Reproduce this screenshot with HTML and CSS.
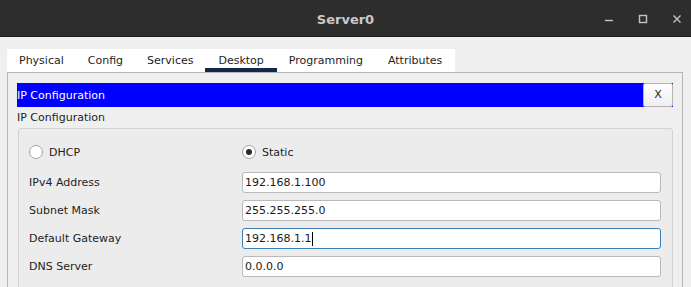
FILE: index.html
```html
<!DOCTYPE html>
<html lang="en">
<head>
  <meta charset="UTF-8" />
  <title>Server0</title>
  <link rel="stylesheet" href="styles.css">
</head>
<body>

  <!-- Window title bar -->
  <div class="titlebar">
    <div></div>
    <div class="title">Server0</div>
    <div class="win-buttons">
      <svg class="win-btn" width="10" height="10" viewBox="0 0 10 10"><line x1="1" y1="6.5" x2="9" y2="6.5" /></svg>
      <svg class="win-btn" width="10" height="10" viewBox="0 0 10 10"><rect x="1.5" y="1.5" width="7" height="7" /></svg>
      <svg class="win-btn" width="10" height="10" viewBox="0 0 10 10"><path d="M1.5 1.5 L8.5 8.5 M8.5 1.5 L1.5 8.5" /></svg>
    </div>
  </div>

  <div class="window-body">
    <!-- Tabs -->
    <div class="tabs">
      <div class="tab">Physical</div>
      <div class="tab">Config</div>
      <div class="tab">Services</div>
      <div class="tab active">Desktop</div>
      <div class="tab">Programming</div>
      <div class="tab last">Attributes</div>
    </div>

    <div class="panel">
      <div class="app-bar">
        <span class="app-title">IP Configuration</span>
        <div class="close-btn">X</div>
      </div>

      <div class="section-label">IP Configuration</div>

      <div class="group">
        <div class="form-grid">
          <div class="radio-row">
            <span class="radio"></span>
            <span>DHCP</span>
          </div>
          <div class="radio-row">
            <span class="radio checked"></span>
            <span>Static</span>
          </div>

          <div class="label">IPv4 Address</div>
          <div class="field">192.168.1.100</div>

          <div class="label">Subnet Mask</div>
          <div class="field">255.255.255.0</div>

          <div class="label">Default Gateway</div>
          <div class="field focused">192.168.1.1<span class="caret"></span></div>

          <div class="label">DNS Server</div>
          <div class="field">0.0.0.0</div>
        </div>
      </div>
    </div>
  </div>

</body>
</html>
```

FILE: styles.css
```css
html, body {
  margin: 0;
  padding: 0;
  width: 100%;
  height: 100%;
  overflow: hidden;
  font-family: 'DejaVu Sans', sans-serif;
  font-size: 11px;
  background-color: #efefef;
  color: #1e1e1e;
}

.titlebar {
  display: grid;
  grid-template-columns: 1fr auto 1fr;
  align-items: center;
  height: 36px;
  background-color: #2d2d2d;
  border-bottom: 1px solid #1b1b1b;
}

.title {
  font-size: 13px;
  font-weight: bold;
  color: #c9c9c9;
  padding-top: 2px;
}

.win-buttons {
  display: flex;
  justify-content: flex-end;
  gap: 24px;
  padding-right: 9px;
  padding-top: 2px;
}

.win-btn {
  fill: none;
  stroke: #c4c4c4;
  stroke-width: 1.4;
}

.window-body {
  padding: 12px 8px 0 7px;
}

.tabs {
  display: inline-flex;
  background-color: #ffffff;
  height: 23px;
  vertical-align: top;
}

.tab {
  padding: 0 12px;
  line-height: 24px;
  color: #1e1e1e;
}

.tab.active {
  box-shadow: inset 0 -4px 0 #0f2a4b;
  padding: 0 13px;
}

.tab.last {
  padding: 0 13px;
}

.panel {
  border: 1px solid #b6b6b6;
  padding: 10px 9px 40px 9px;
}

.app-bar {
  display: flex;
  align-items: center;
  height: 24px;
  background-color: #0000ff;
}

.app-title {
  flex: 1;
  color: #ffffff;
}

.close-btn {
  width: 28px;
  height: 22px;
  line-height: 22px;
  text-align: center;
  background: linear-gradient(#ffffff, #eeeeee);
  border: 1px solid #b3b3b3;
  border-radius: 2px;
  color: #222;
}

.section-label {
  line-height: 20px;
  padding-top: 1px;
}

.group {
  margin-left: 1px;
  border: 1px solid #d3d3d3;
  border-radius: 3px;
  background-color: #ececec;
  padding: 12px 11px 20px 10px;
}

.form-grid {
  display: grid;
  grid-template-columns: 213px 1fr;
  grid-template-rows: 24px;
  grid-auto-rows: 21px;
  row-gap: 7px;
  align-items: center;
}

.radio-row {
  display: flex;
  align-items: center;
  align-self: start;
  gap: 6px;
  height: 22px;
}

.radio {
  box-sizing: border-box;
  width: 14px;
  height: 14px;
  border: 1px solid #a3a3a3;
  border-radius: 50%;
  background-color: #ffffff;
  display: flex;
  align-items: center;
  justify-content: center;
}

.radio.checked::after {
  content: "";
  width: 6px;
  height: 6px;
  border-radius: 50%;
  background-color: #2c2c2c;
}

.field {
  box-sizing: border-box;
  height: 21px;
  line-height: 19px;
  padding-left: 2px;
  background-color: #ffffff;
  border: 1px solid #b9b9b9;
  border-radius: 3px;
  color: #1a1a1a;
  display: flex;
  align-items: center;
}

.field.focused {
  border-color: #3b7fb3;
}

.caret {
  display: inline-block;
  width: 1px;
  height: 14px;
  margin-left: 1px;
  background-color: #000000;
}
```
